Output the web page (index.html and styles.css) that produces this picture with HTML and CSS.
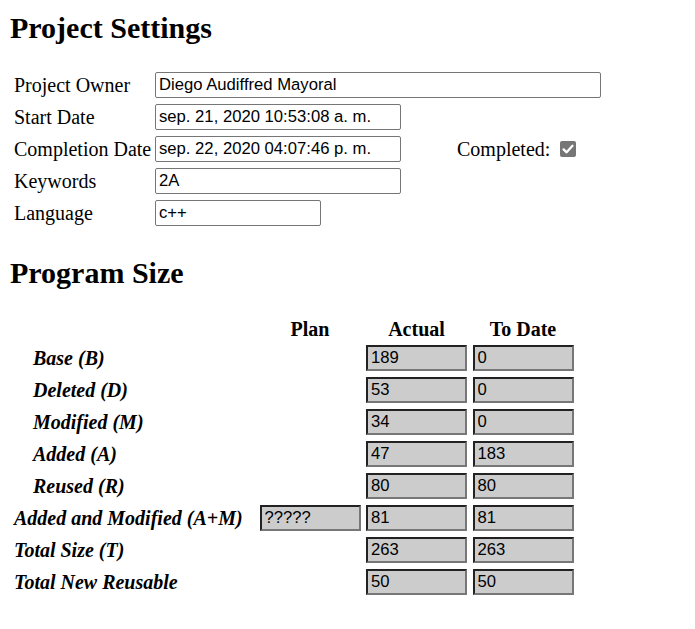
FILE: index.html
```html
<!DOCTYPE html>
<html lang="en">
<head>
<meta charset="utf-8">
<title>Project Settings</title>
<link rel="stylesheet" href="styles.css">
</head>
<body>
<div class="page">
  <h1 class="title">Project Settings</h1>
  <div class="settings">
    <label class="label">Project Owner</label>
    <div class="field"><input class="text w-owner" type="text" value="Diego Audiffred Mayoral"></div>

    <label class="label">Start Date</label>
    <div class="field"><input class="text w-date" type="text" value="sep. 21, 2020 10:53:08 a. m."></div>

    <label class="label">Completion Date</label>
    <div class="field">
      <input class="text w-date" type="text" value="sep. 22, 2020 04:07:46 p. m.">
      <span class="completed">Completed:</span>
      <span class="check" role="checkbox" aria-checked="true" aria-disabled="true">
        <svg viewBox="0 0 16 16" width="16" height="16"><path d="M3.6 8.4 L6.6 11.3 L12.5 4.8" fill="none" stroke="#fff" stroke-width="2.3" stroke-linecap="round" stroke-linejoin="round"/></svg>
      </span>
    </div>

    <label class="label">Keywords</label>
    <div class="field"><input class="text w-date" type="text" value="2A"></div>

    <label class="label">Language</label>
    <div class="field"><input class="text w-lang" type="text" value="c++"></div>
  </div>

  <h1 class="title title-size">Program Size</h1>

  <div class="size-grid size-head">
    <span></span>
    <span class="head">Plan</span>
    <span class="head">Actual</span>
    <span class="head">To Date</span>
  </div>
  <div class="size-grid">
    <span class="row-label indent">Base (B)</span><span></span>
    <input class="num" type="text" value="189" readonly><input class="num" type="text" value="0" readonly>

    <span class="row-label indent">Deleted (D)</span><span></span>
    <input class="num" type="text" value="53" readonly><input class="num" type="text" value="0" readonly>

    <span class="row-label indent">Modified (M)</span><span></span>
    <input class="num" type="text" value="34" readonly><input class="num" type="text" value="0" readonly>

    <span class="row-label indent">Added (A)</span><span></span>
    <input class="num" type="text" value="47" readonly><input class="num" type="text" value="183" readonly>

    <span class="row-label indent">Reused (R)</span><span></span>
    <input class="num" type="text" value="80" readonly><input class="num" type="text" value="80" readonly>

    <span class="row-label">Added and Modified (A+M)</span>
    <input class="num" type="text" value="?????" readonly>
    <input class="num" type="text" value="81" readonly><input class="num" type="text" value="81" readonly>

    <span class="row-label">Total Size (T)</span><span></span>
    <input class="num" type="text" value="263" readonly><input class="num" type="text" value="263" readonly>

    <span class="row-label">Total New Reusable</span><span></span>
    <input class="num" type="text" value="50" readonly><input class="num" type="text" value="50" readonly>
  </div>
</div>
</body>
</html>
```

FILE: styles.css
```css
html, body {
  margin: 0;
  padding: 0;
  background: #ffffff;
}

body {
  font-family: "Liberation Serif", "Times New Roman", serif;
  font-size: 20px;
  color: #000;
}

.page {
  padding: 11px 10px 10px 10px;
}

.title {
  margin: 0;
  font-size: 30px;
  line-height: 34px;
  font-weight: bold;
}

.settings {
  display: grid;
  grid-template-columns: 141px 1fr;
  grid-auto-rows: 26px;
  row-gap: 6px;
  margin-top: 27px;
  padding-left: 4px;
}

.label {
  display: flex;
  align-items: center;
  white-space: nowrap;
  padding-top: 1px;
}

.field {
  display: flex;
  align-items: center;
}

.text {
  box-sizing: border-box;
  height: 26px;
  margin: 0;
  padding: 0 3px;
  border: 1px solid #767676;
  border-radius: 2px;
  background: #fff;
  font-family: "Liberation Sans", Arial, sans-serif;
  font-size: 16.67px;
  color: #000;
}

.w-owner { width: 446px; }
.w-date { width: 246px; }
.w-lang { width: 166px; }

.completed {
  margin-left: 56px;
  padding-top: 1px;
}

.check {
  display: inline-flex;
  width: 16px;
  height: 16px;
  margin-left: 10px;
  border-radius: 2px;
  background: #767676;
}

.title-size {
  margin-top: 30px;
}

.size-grid {
  display: grid;
  grid-template-columns: 240px 101px 101px 101px;
  column-gap: 5.5px;
  grid-auto-rows: 26px;
  row-gap: 6px;
  padding-left: 4px;
}

.size-head {
  grid-auto-rows: 23px;
  margin-top: 28px;
  margin-bottom: 4px;
}

.head {
  font-weight: bold;
  text-align: center;
  line-height: 23px;
}

.row-label {
  display: flex;
  align-items: center;
  font-weight: bold;
  font-style: italic;
  white-space: nowrap;
}

.indent {
  padding-left: 19px;
}

.num {
  box-sizing: border-box;
  width: 101px;
  height: 26px;
  margin: 0;
  padding: 0 3px;
  border-style: solid;
  border-width: 2px;
  border-color: #222 #777 #777 #222;
  background: #cccccc;
  font-family: "Liberation Sans", Arial, sans-serif;
  font-size: 16.67px;
  color: #000;
}
```
